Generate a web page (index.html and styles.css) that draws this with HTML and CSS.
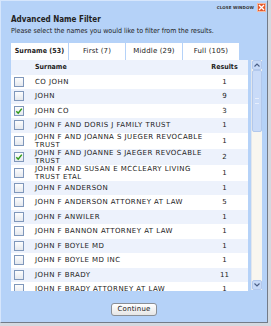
FILE: index.html
```html
<!DOCTYPE html>
<html lang="en">
<head>
    <meta charset="UTF-8">
    <meta name="viewport" content="width=device-width, initial-scale=1.0">
    <title>Advanced Name Filter</title>
    <link rel="stylesheet" href="styles.css">
</head>
<body>

    <div class="window">
        <div class="close-bar">
            <span class="close-label">CLOSE WINDOW</span>
            <span class="close-btn">
                <svg width="7" height="7" viewBox="0 0 7 7"><path d="M1 1 L6 6 M6 1 L1 6" stroke="#fff" stroke-width="1.4"/></svg>
            </span>
        </div>

        <h1 class="title">Advanced Name Filter</h1>
        <p class="intro">Please select the names you would like to filter from the results.</p>

        <div class="tabs">
            <div class="tab active">Surname (53)</div>
            <div class="tab">First (7)</div>
            <div class="tab">Middle (29)</div>
            <div class="tab">Full (105)</div>
        </div>

        <div class="list-wrap">
            <div class="list">
                <div class="row head">
                    <span></span>
                    <span class="name">Surname</span>
                    <span class="count">Results</span>
                </div>
                <div class="row"><span class="check"></span><span class="name">CO JOHN</span><span class="count">1</span></div>
                <div class="row"><span class="check"></span><span class="name">JOHN</span><span class="count">9</span></div>
                <div class="row"><span class="check on"><svg width="8" height="8" viewBox="0 0 8 8"><path d="M1.3 4.2 L3.2 6.2 L6.8 1.6" fill="none" stroke="#2e9a18" stroke-width="1.5"/></svg></span><span class="name">JOHN CO</span><span class="count">3</span></div>
                <div class="row"><span class="check"></span><span class="name">JOHN F AND DORIS J FAMILY TRUST</span><span class="count">1</span></div>
                <div class="row"><span class="check"></span><span class="name">JOHN F AND JOANNA S JUEGER REVOCABLE TRUST</span><span class="count">1</span></div>
                <div class="row"><span class="check on"><svg width="8" height="8" viewBox="0 0 8 8"><path d="M1.3 4.2 L3.2 6.2 L6.8 1.6" fill="none" stroke="#2e9a18" stroke-width="1.5"/></svg></span><span class="name">JOHN F AND JOANNE S JAEGER REVOCABLE TRUST</span><span class="count">2</span></div>
                <div class="row"><span class="check"></span><span class="name">JOHN F AND SUSAN E MCCLEARY LIVING TRUST ETAL</span><span class="count">1</span></div>
                <div class="row"><span class="check"></span><span class="name">JOHN F ANDERSON</span><span class="count">1</span></div>
                <div class="row"><span class="check"></span><span class="name">JOHN F ANDERSON ATTORNEY AT LAW</span><span class="count">5</span></div>
                <div class="row"><span class="check"></span><span class="name">JOHN F ANWILER</span><span class="count">1</span></div>
                <div class="row"><span class="check"></span><span class="name">JOHN F BANNON ATTORNEY AT LAW</span><span class="count">1</span></div>
                <div class="row"><span class="check"></span><span class="name">JOHN F BOYLE MD</span><span class="count">1</span></div>
                <div class="row"><span class="check"></span><span class="name">JOHN F BOYLE MD INC</span><span class="count">1</span></div>
                <div class="row"><span class="check"></span><span class="name">JOHN F BRADY</span><span class="count">11</span></div>
                <div class="row"><span class="check"></span><span class="name">JOHN F BRADY ATTORNEY AT LAW</span><span class="count">1</span></div>
            </div>

            <div class="scrollbar">
                <span class="sb-btn">
                    <svg width="6" height="4" viewBox="0 0 6 4"><path d="M0.5 3.5 L3 1 L5.5 3.5" fill="none" stroke="#4a5f86" stroke-width="1.1"/></svg>
                </span>
                <span class="sb-thumb"><span class="grip"></span></span>
                <span class="sb-track"></span>
                <span class="sb-btn">
                    <svg width="6" height="4" viewBox="0 0 6 4"><path d="M0.5 0.5 L3 3 L5.5 0.5" fill="none" stroke="#4a5f86" stroke-width="1.1"/></svg>
                </span>
            </div>
        </div>

        <div class="actions">
            <button type="button">Continue</button>
        </div>
    </div>

</body>
</html>
```

FILE: styles.css
```css
body {
    margin: 0;
    padding: 0;
    background-color: #d4d9e0;
    font-family: "DejaVu Sans", Verdana, sans-serif;
    color: #222;
}

.window {
    width: 266px;
    height: 321px;
    background-color: #b5d2f8;
    border-top: 1px solid #d6e6fc;
    border-left: 1px solid #d6e6fc;
    border-right: 1px solid #737b88;
    border-bottom: 1px solid #737b88;
}

.close-bar {
    display: flex;
    justify-content: flex-end;
    align-items: center;
    gap: 3px;
    height: 9px;
    padding: 2px 1px 0 0;
}

.close-label {
    font-size: 4px;
    font-weight: bold;
    letter-spacing: 0.1px;
    color: #333;
}

.close-btn {
    display: flex;
    align-items: center;
    justify-content: center;
    width: 7px;
    height: 7px;
    background-color: #e5582a;
    border: 1px solid #f4b9a0;
}

.title {
    margin: 3px 0 0 10px;
    font-family: "DejaVu Sans Condensed", "DejaVu Sans", sans-serif;
    font-size: 8px;
    line-height: 10px;
    font-weight: bold;
}

.intro {
    margin: 2px 0 0 10px;
    font-family: "DejaVu Sans Condensed", "DejaVu Sans", sans-serif;
    font-size: 7px;
    line-height: 9px;
}

.tabs {
    display: flex;
    gap: 1px;
    margin: 7px 0 0 10px;
}

.tab {
    width: 56px;
    height: 17px;
    line-height: 17px;
    background-color: #fff;
    text-align: center;
    font-size: 7px;
    letter-spacing: 0.15px;
}

.tab.active {
    width: 57px;
    font-family: "DejaVu Sans Condensed", "DejaVu Sans", sans-serif;
    font-weight: bold;
    letter-spacing: 0.1px;
}

.list-wrap {
    display: flex;
    gap: 3px;
    margin-left: 10px;
}

.list {
    width: 237px;
    height: 231px;
    overflow: hidden;
    background-color: #fff;
}

.row {
    display: grid;
    grid-template-columns: 24px 1fr 27px;
    align-items: center;
    min-height: 14.5px;
    padding-right: 10px;
    font-size: 7px;
    line-height: 8px;
    letter-spacing: 0.45px;
}

.row:nth-child(odd) {
    background-color: #edf2fc;
}

.row .name {
    padding-right: 4px;
}

.row .count {
    text-align: center;
    letter-spacing: 0;
}

.row.head {
    font-family: "DejaVu Sans Condensed", "DejaVu Sans", sans-serif;
    font-weight: bold;
    letter-spacing: 0;
}

.check {
    display: flex;
    align-items: center;
    justify-content: center;
    width: 8px;
    height: 8px;
    margin-left: 3px;
    border: 1px solid #7f97bb;
    background: linear-gradient(#fdfdfd, #e4e8ee);
}

.scrollbar {
    display: flex;
    flex-direction: column;
    width: 10px;
    height: 230px;
    background-color: #f8f6f0;
    border-left: 1px solid #e2e6ec;
}

.sb-btn {
    display: flex;
    align-items: center;
    justify-content: center;
    height: 10px;
    background-color: #c6d9f7;
    border: 1px solid #b2c8ec;
    border-radius: 2px;
    box-sizing: border-box;
}

.sb-thumb {
    display: flex;
    align-items: center;
    justify-content: center;
    height: 62px;
    background-color: #c9dbf8;
    border: 1px solid #b2c8ec;
    border-radius: 2px;
    box-sizing: border-box;
}

.grip {
    width: 4px;
    height: 4px;
    border-top: 1px solid #e6eefc;
    border-bottom: 1px solid #e6eefc;
}

.sb-track {
    flex: 1;
}

.actions {
    display: flex;
    justify-content: center;
    margin-top: 12px;
}

button {
    height: 13px;
    padding: 0 5px;
    font-family: "DejaVu Sans", Verdana, sans-serif;
    font-size: 7px;
    line-height: 11px;
    letter-spacing: 0.2px;
    color: #222;
    background: linear-gradient(#ffffff, #e6e6e6);
    border: 1px solid #8a8f96;
    border-radius: 3px;
    cursor: pointer;
}
```
